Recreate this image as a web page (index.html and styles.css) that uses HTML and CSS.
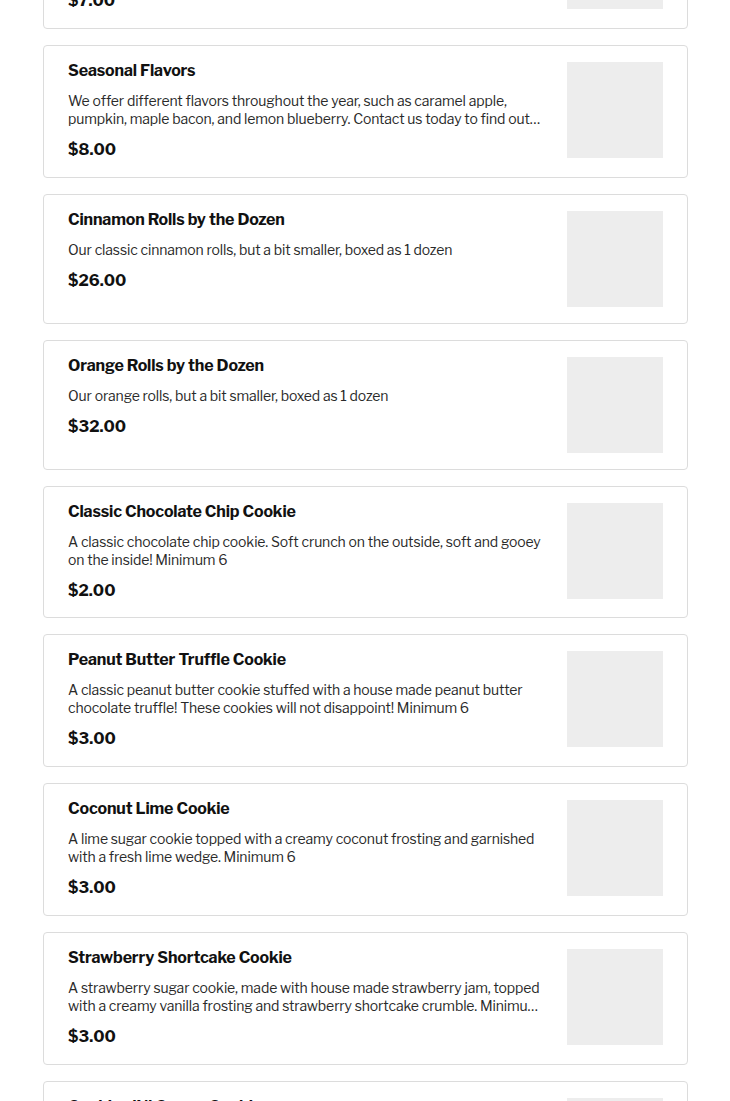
FILE: index.html
```html
<!DOCTYPE html>
<html lang="en">
<head>
<meta charset="utf-8">
<title>Menu</title>
<link rel="stylesheet" href="styles.css">
</head>
<body>
<main class="menu">
  <article class="item">
    <div class="info">
      <h3 class="name">Orange Rolls</h3>
      <p class="desc">Our signature orange rolls, made with fresh orange zest and topped with a sweet orange glaze. Sold individually.</p>
      <p class="price">$7.00</p>
    </div>
    <div class="thumb"></div>
  </article>
  <article class="item">
    <div class="info">
      <h3 class="name">Seasonal Flavors</h3>
      <p class="desc">We offer different flavors throughout the year, such as caramel apple, pumpkin, maple bacon, and lemon blueberry. Contact us today to find out what flavors we are currently offering!</p>
      <p class="price">$8.00</p>
    </div>
    <div class="thumb"></div>
  </article>
  <article class="item">
    <div class="info">
      <h3 class="name">Cinnamon Rolls by the Dozen</h3>
      <p class="desc">Our classic cinnamon rolls, but a bit smaller, boxed as 1 dozen</p>
      <p class="price">$26.00</p>
    </div>
    <div class="thumb"></div>
  </article>
  <article class="item">
    <div class="info">
      <h3 class="name">Orange Rolls by the Dozen</h3>
      <p class="desc">Our orange rolls, but a bit smaller, boxed as 1 dozen</p>
      <p class="price">$32.00</p>
    </div>
    <div class="thumb"></div>
  </article>
  <article class="item">
    <div class="info">
      <h3 class="name">Classic Chocolate Chip Cookie</h3>
      <p class="desc">A classic chocolate chip cookie. Soft crunch on the outside, soft and gooey on the inside! Minimum 6</p>
      <p class="price">$2.00</p>
    </div>
    <div class="thumb"></div>
  </article>
  <article class="item">
    <div class="info">
      <h3 class="name">Peanut Butter Truffle Cookie</h3>
      <p class="desc">A classic peanut butter cookie stuffed with a house made peanut butter chocolate truffle! These cookies will not disappoint! Minimum 6</p>
      <p class="price">$3.00</p>
    </div>
    <div class="thumb"></div>
  </article>
  <article class="item">
    <div class="info">
      <h3 class="name">Coconut Lime Cookie</h3>
      <p class="desc">A lime sugar cookie topped with a creamy coconut frosting and garnished with a fresh lime wedge. Minimum 6</p>
      <p class="price">$3.00</p>
    </div>
    <div class="thumb"></div>
  </article>
  <article class="item">
    <div class="info">
      <h3 class="name">Strawberry Shortcake Cookie</h3>
      <p class="desc">A strawberry sugar cookie, made with house made strawberry jam, topped with a creamy vanilla frosting and strawberry shortcake crumble. Minimum 6</p>
      <p class="price">$3.00</p>
    </div>
    <div class="thumb"></div>
  </article>
  <article class="item">
    <div class="info">
      <h3 class="name">Cookies ’N’ Cream Cookie</h3>
      <p class="desc">A chocolate sugar cookie topped with a cookies and cream frosting and a crushed chocolate cookie. Minimum 6</p>
      <p class="price">$3.00</p>
    </div>
    <div class="thumb"></div>
  </article>
</main>
</body>
</html>
```
FILE: styles.css
```css
html, body {
  margin: 0;
  padding: 0;
  background: #fff;
  overflow: hidden;
}
body {
  font-family: "Libre Franklin", Inter, "Liberation Sans", sans-serif;
  color: #000;
}
.menu {
  width: 645px;
  margin: -104px 0 0 43px;
  display: flex;
  flex-direction: column;
  gap: 16px;
}
.item {
  display: flex;
  align-items: flex-start;
  gap: 24px;
  padding: 15px 24px 15.75px;
  border: 1px solid #dcdcdc;
  border-radius: 4px;
  background: #fff;
}
.info {
  flex: 1;
  min-width: 0;
}
.name {
  margin: 0;
  font-size: 16px;
  line-height: 20px;
  font-weight: 700;
  letter-spacing: -0.15px;
  color: #111;
}
.desc {
  margin: 11px 0 0;
  font-size: 14px;
  line-height: 18px;
  letter-spacing: -0.13px;
  color: #2a2a2a;
  display: -webkit-box;
  -webkit-box-orient: vertical;
  -webkit-line-clamp: 2;
  overflow: hidden;
}
.price {
  margin: 11px 0 0;
  font-size: 16px;
  line-height: 22px;
  font-weight: 700;
  color: #111;
}
.thumb {
  flex: 0 0 96px;
  width: 96px;
  height: 96px;
  margin: 1px 0 0.25px;
  background: #ededed;
}
```
